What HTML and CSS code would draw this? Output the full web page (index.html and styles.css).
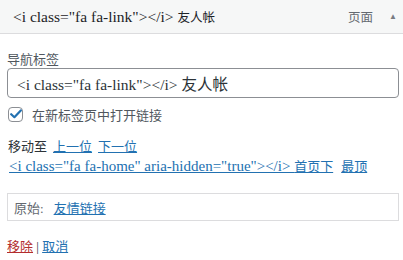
FILE: index.html
```html
<!DOCTYPE html>
<html lang="zh-CN">
<head>
<meta charset="utf-8">
<title>菜单项</title>
<link rel="stylesheet" href="styles.css">
</head>
<body>
<div class="item">
  <div class="item-bar">
    <span class="item-title"><span class="lt-title">&lt;i class="fa fa-link"&gt;&lt;/i&gt; </span>友人帐</span>
    <span class="item-controls"><span class="item-type">页面</span><span class="item-arrow">▲</span></span>
  </div>
  <div class="item-settings">
    <label class="field-label" for="title">导航标签</label>
    <input class="field-input" id="title" type="text" value="&lt;i class=&quot;fa fa-link&quot;&gt;&lt;/i&gt; 友人帐">
    <div class="check-row">
      <span class="checkbox"><svg width="12" height="10" viewBox="0 0 12 10"><path d="M1.2 5.2 L4.4 8.2 L10.8 1.4" fill="none" stroke="#2271b1" stroke-width="2.2" stroke-linecap="round" stroke-linejoin="round"/></svg></span>
      <span class="check-text">在新标签页中打开链接</span>
    </div>
    <div class="move-row">
      <span>移动至</span>
      <a href="#">上一位</a>
      <a href="#">下一位</a>
    </div>
    <div class="move-row move-row-2">
      <a href="#"><span class="lt">&lt;i class="fa fa-home" aria-hidden="true"&gt;&lt;/i&gt; </span>首页下</a>
      <a href="#">最顶</a>
    </div>
    <div class="original"><span>原始:</span><a href="#" class="orig-link">友情链接</a></div>
    <div class="actions"><a href="#" class="remove">移除</a> <span class="sep">|</span> <a href="#">取消</a></div>
  </div>
</div>
</body>
</html>
```
FILE: styles.css
```css
html, body {
  margin: 0;
  padding: 0;
  background: #fff;
}
body {
  font-family: "Liberation Serif", "Noto Sans CJK SC", serif;
  font-size: 13px;
  color: #2c3338;
  width: 403px;
  height: 260px;
  overflow: hidden;
}
a {
  color: #2271b1;
  text-decoration: underline;
}
.item-bar {
  height: 33px;
  background: #f6f7f7;
  border-bottom: 1px solid #dcdcde;
  display: flex;
  align-items: center;
  justify-content: space-between;
  padding: 0 6px 0 13px;
}
.item-title {
  font-size: 12.5px;
  color: #1d2327;
}
.lt-title {
  font-size: 15.5px;
}
.item-controls {
  display: flex;
  align-items: center;
  color: #646970;
}
.item-type {
  font-size: 12.5px;
}
.item-arrow {
  font-size: 8px;
  margin-left: 16px;
  color: #787c82;
}
.item-settings {
  padding: 0 4px 0 7px;
}
.field-label {
  display: block;
  margin-top: 16px;
  line-height: 19px;
  font-size: 13px;
  color: #50575e;
}
.field-input {
  display: block;
  box-sizing: border-box;
  width: 100%;
  height: 30px;
  margin: -1px 0 0;
  padding: 0 9px;
  border: 1px solid #8c8f94;
  border-radius: 4px;
  font-family: "Liberation Serif", "Noto Sans CJK SC", serif;
  font-size: 15.5px;
  color: #2c3338;
  background: #fff;
}
.check-row {
  display: flex;
  align-items: center;
  margin-top: 7px;
  height: 18px;
  padding-left: 1px;
}
.checkbox {
  width: 15px;
  height: 15px;
  border: 1px solid #8c8f94;
  border-radius: 4px;
  display: flex;
  align-items: center;
  justify-content: center;
  box-sizing: border-box;
  margin-right: 9px;
}
.check-text {
  color: #50575e;
}
.move-row {
  line-height: 18px;
  display: flex;
  align-items: baseline;
  gap: 6px;
  padding-left: 1px;
}
.check-row + .move-row {
  margin-top: 15px;
}
.move-row-2 {
  margin-top: 1px;
  padding-left: 2px;
  gap: 8px;
}
.lt {
  font-size: 15px;
}
.original {
  margin-top: 17px;
  height: 28px;
  box-sizing: border-box;
  border: 1px solid #dcdcde;
  padding: 0 6px;
  display: flex;
  align-items: center;
  color: #646970;
}
.orig-link {
  margin-left: 10px;
}
.actions {
  margin-top: 17px;
  line-height: 18px;
}
.remove {
  color: #b32d2e;
}
.sep {
  color: #2c3338;
}
```
